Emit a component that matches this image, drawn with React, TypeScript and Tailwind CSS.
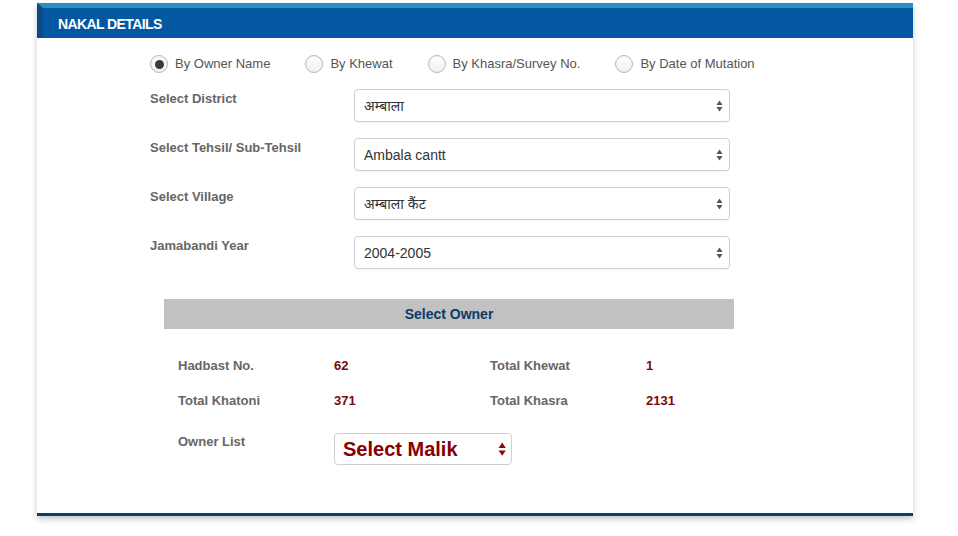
import React from "react";

const SANS = "font-['Liberation_Sans','Noto_Sans','Noto_Sans_Devanagari',sans-serif]";

function SelectArrows({ color = "#555", size = 1 }: { color?: string; size?: number }) {
  return (
    <svg width={7 * size} height={12 * size} viewBox="0 0 7 12" aria-hidden="true">
      <path d="M3.5 0.5 L6.5 5 L0.5 5 Z" fill={color} />
      <path d="M0.5 7 L6.5 7 L3.5 11.5 Z" fill={color} />
    </svg>
  );
}

function Radio({ label, checked = false }: { label: string; checked?: boolean }) {
  return (
    <label className="flex items-center gap-[7px]">
      <span className="flex h-[18px] w-[18px] items-center justify-center rounded-full border border-[#b8b8b8] bg-gradient-to-b from-white to-[#f0f0f0] shadow-[inset_0_1px_1px_rgba(0,0,0,0.05)]">
        {checked && <span className="h-[9px] w-[9px] rounded-full bg-[#3a3a3a]"></span>}
      </span>
      <span className="text-[13px] leading-[16px] text-[#555]">{label}</span>
    </label>
  );
}

function FormRow({ label, value }: { label: string; value: string }) {
  return (
    <div className="flex">
      <div className="w-[204px] pt-[2px] text-[13px] font-bold leading-[16px] text-[#666]">{label}</div>
      <div className="flex h-[33px] w-[376px] items-center justify-between rounded-[4px] border border-[#cfcfcf] bg-white pl-[9px] pr-[6px] pt-[1px] shadow-[0_1px_1px_rgba(0,0,0,0.04)]">
        <span className="text-[14px] text-[#333]">{value}</span>
        <SelectArrows />
      </div>
    </div>
  );
}

function Stat({ label, value }: { label: string; value: string }) {
  return (
    <>
      <div className="w-[156px] text-[13px] font-bold leading-[16px] text-[#666]">{label}</div>
      <div className="w-[156px] text-[13px] font-bold leading-[16px] text-[#7a0b0b]">{value}</div>
    </>
  );
}

export default function App() {
  return (
    <div className={`h-[536px] w-[958px] overflow-hidden bg-white ${SANS}`}>
      <div className="ml-[37px] mt-[3px] w-[876px] bg-white shadow-[0_3px_6px_rgba(0,0,0,0.22)]">
        {/* Header bar */}
        <div className="flex h-[35px] items-center border-l-[6px] border-t-[5px] border-l-[#0a4a86] border-t-[#2b8fc2] bg-[#0358a1] pl-[15px] pt-[3px]">
          <h2 className="text-[14px] font-bold tracking-[-0.6px] text-white">NAKAL DETAILS</h2>
        </div>

        {/* Body */}
        <div className="h-[475px] pl-[113px] pt-[17px]">
          <div className="flex gap-[35px]">
            <Radio label="By Owner Name" checked />
            <Radio label="By Khewat" />
            <Radio label="By Khasra/Survey No." />
            <Radio label="By Date of Mutation" />
          </div>

          <div className="mt-[16px] flex flex-col gap-[16px]">
            <FormRow label="Select District" value="अम्बाला" />
            <FormRow label="Select Tehsil/ Sub-Tehsil" value="Ambala cantt" />
            <FormRow label="Select Village" value="अम्बाला कैंट" />
            <FormRow label="Jamabandi Year" value="2004-2005" />
          </div>

          <div className="ml-[14px] mt-[30px] flex h-[30px] w-[570px] items-center justify-center bg-[#c1c1c1]">
            <span className="text-[14px] font-bold text-[#0b3a6b]">Select Owner</span>
          </div>

          <div className="ml-[28px] mt-[29px] flex flex-col gap-[19px]">
            <div className="flex">
              <Stat label="Hadbast No." value="62" />
              <Stat label="Total Khewat" value="1" />
            </div>
            <div className="flex">
              <Stat label="Total Khatoni" value="371" />
              <Stat label="Total Khasra" value="2131" />
            </div>
            <div className="mt-[5px] flex">
              <div className="w-[156px] pt-[1px] text-[13px] font-bold leading-[16px] text-[#666]">Owner List</div>
              <div className="flex h-[32px] w-[178px] items-center justify-between rounded-[4px] border border-[#cfcfcf] bg-white pl-[8px] pr-[5px]">
                <span className="text-[20px] font-bold text-[#870000]">Select Malik</span>
                <SelectArrows color="#8a0a0a" size={1.2} />
              </div>
            </div>
          </div>
        </div>
        <div className="h-[3px] bg-[#0d3e6c]"></div>
      </div>
    </div>
  );
}
